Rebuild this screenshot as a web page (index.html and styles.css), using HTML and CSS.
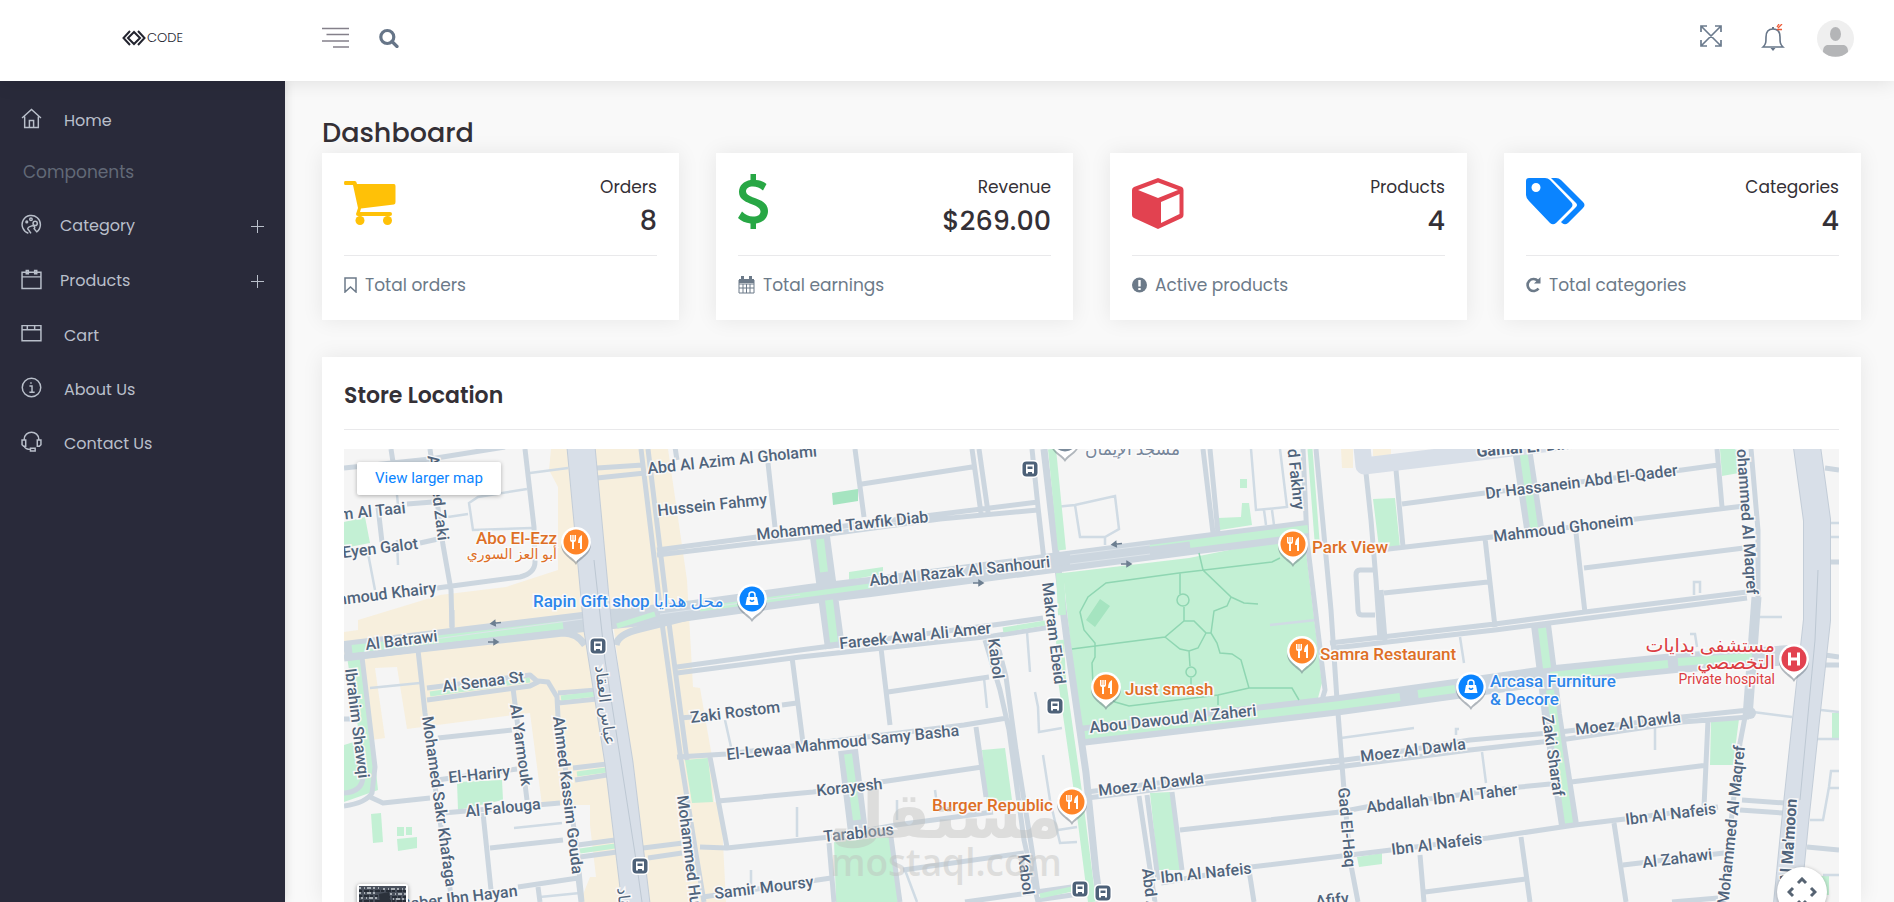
FILE: index.html
```
<!DOCTYPE html>
<html lang="en">
<head>
<meta charset="utf-8">
<meta name="viewport" content="width=device-width, initial-scale=1">
<title>Dashboard</title>
<link rel="stylesheet" href="styles.css">
</head>
<body>
<header class="topbar">
  <a class="brand" href="#" aria-label="Code">
    <svg class="brand-mark" viewBox="0 0 24 16"><g fill="none" stroke="#23242f" stroke-width="2"><path d="M8 1L1.500 8L8 15M16 1L22.500 8L16 15"/><path d="M12 2L6 8L12 14L18 8Z"/></g></svg>
    <span class="brand-name">CODE</span>
  </a>
  <div class="tools">
    <button class="icon-btn" aria-label="Toggle menu"><svg width="27" height="22" viewBox="0 0 27 22"><path d="M0 1.500H27M4.500 7.500H27M0 14H27M11 20H27" stroke="#84808a" stroke-width="1.600"/></svg></button>
    <button class="icon-btn" aria-label="Search"><svg width="20" height="20" viewBox="0 0 20 20" fill="none" stroke="#667588" stroke-width="3.200"><circle cx="8.300" cy="9" r="6.500"/><path d="M13 13.500L18 18.500" stroke-linecap="round"/></svg></button>
  </div>
  <div class="account">
    <button class="icon-btn expand" aria-label="Full screen"><svg width="22" height="22" viewBox="0 0 22 22" fill="none" stroke="#6b7b8d" stroke-width="1.700"><path d="M1 1L21 21M21 1L1 21M1 7V1H7M15 1H21V7M21 15V21H15M7 21H1V15"/></svg></button>
    <button class="icon-btn bell" aria-label="Notifications"><svg width="24" height="28" viewBox="0 0 24 28"><path d="M2 23H22C19 20.500 19 18 19 13C19 8 16.500 5 12 5S5 8 5 13C5 18 5 20.500 2 23Z" fill="none" stroke="#667588" stroke-width="1.600"/><path d="M11 5V3H13V5M9.500 24H14.500L12 27Z" fill="#667588"/><path d="M16 3L18 0M17 4L21 0M16 5.500H21" stroke="#ee5a36" stroke-width="1.300"/></svg></button>
    <button class="icon-btn" aria-label="Profile"><svg width="37" height="37" viewBox="0 0 37 37"><circle cx="18.500" cy="18.500" r="18.500" fill="#efefef"/><ellipse cx="18.500" cy="14" rx="5.500" ry="7" fill="#b4b5b7"/><path d="M6 32C6 27 8 25 11 25H26C29 25 31 27 31 32A18.500 18.500 0 0 1 6 32Z" fill="#b4b5b7"/></svg></button>
  </div>
</header>
<div class="shell">
<nav class="sidebar" aria-label="Main">
  <ul class="menu">
    <li><a class="item" href="#"><svg class="ico" viewBox="0 0 20 20"><path d="M1 9.500L10 1.500L19 9.500M3.500 8V18.500H16.500V8M8 18V12H12V18"/></svg><span>Home</span></a></li>
    <li class="section">Components</li>
    <li><button class="item tight"><svg class="ico" viewBox="0 0 20 20"><path d="M7 18.300A8.700 8.700 0 1 1 15 17L12.500 14C14 12 12 10.500 9.500 11.500C6.500 12.500 5.500 14 7.500 15.500L9.500 18.500"/><circle cx="9.500" cy="5" r="1.200"/><circle cx="5.500" cy="7.500" r=".8"/><circle cx="13.500" cy="9" r="2"/></svg><span>Category</span><i class="plus"></i></button></li>
    <li><button class="item tight"><svg class="ico" viewBox="0 0 20 20"><path d="M1 3H19V18.500H1ZM1 7.500H19M5 1.500H7V4.500H5ZM13 1.500H15V4.500H13Z"/></svg><span>Products</span><i class="plus"></i></button></li>
    <li><a class="item" href="#"><svg class="ico" viewBox="0 0 20 20"><path d="M1 2.500H19V17H1ZM1 6.500H19M6 2.500V6M13 2.500V6"/></svg><span>Cart</span></a></li>
    <li><a class="item" href="#"><svg class="ico" viewBox="0 0 20 20"><circle cx="10" cy="10" r="8.800"/><path d="M8 8.500H10.500V14.500M8 14.500H13M9.500 5V6.500"/></svg><span>About Us</span></a></li>
    <li><a class="item" href="#"><svg class="ico" viewBox="0 0 20 20"><path d="M3 8C3 -1 17 -1 17 8M1 8.500H4.500V14.500H2.500L1 13ZM19 8.500H15.500V14.500H17.500L19 13ZM3 14.500C4 17 6 17.500 9 17.500M9 16.500H13.500V19H9Z"/></svg><span>Contact Us</span></a></li>
  </ul>
</nav>
<main class="content">
  <h1 class="page-title">Dashboard</h1>
  <section class="stats">
    <article class="card stat">
      <div class="stat-top">
        <svg class="big" width="52" height="56" viewBox="0 0 52 56" fill="#ffc107"><path d="M1 7H11Q12.500 7 13 10H50Q51.500 10 51.500 12V28Q51.500 30 50 30.500L17 34.500L16 38H46Q48 38 48 40T46 42H14Q12 42 12 40L14 34L9 11H1Q0 11 0 9T1 7Z"/><circle cx="16" cy="46.500" r="4.500"/><circle cx="43.500" cy="46.500" r="4.500"/></svg>
        <div class="figures"><span>Orders</span><strong>8</strong></div>
      </div>
      <p class="note"><svg width="13" height="16" viewBox="0 0 13 16"><path d="M1 1H12V15L6.500 10L1 15Z" fill="none" stroke="#6c7a89" stroke-width="1.500"/></svg>Total orders</p>
    </article>
    <article class="card stat">
      <div class="stat-top">
        <svg class="big" width="30" height="56" viewBox="0 0 30 56"><path d="M12.500 0H18V6C23 6.500 26 8 28.500 10L25 16.500C22 14 18.500 12.500 15 12.500C10.500 12.500 8 14.500 8 17.500C8 25 30 23 30 37C30 44 25 48.500 18 49.500V55H12.500V49.500C7.500 49 3 47 0 44L4 37.500C7.500 41 11 42.500 15 42.500C20 42.500 22.500 40.500 22.500 37.500C22.500 29 1 31 1 18C1 11.500 6 7 12.500 6Z" fill="#28a745"/></svg>
        <div class="figures"><span>Revenue</span><strong>$269.00</strong></div>
      </div>
      <p class="note"><svg width="17" height="18" viewBox="0 0 17 18"><path d="M1 4H16V17H1ZM1 8H16M1 12H16M5 8V17M8.500 8V17M12 8V17" fill="none" stroke="#6c7a89"/><path d="M1 3H16V7H1ZM3 0H6V4H3ZM11 0H14V4H11Z" fill="#6c7a89"/></svg>Total earnings</p>
    </article>
    <article class="card stat">
      <div class="stat-top">
        <svg class="big" width="52" height="56" viewBox="0 0 52 56"><path d="M26 4L50 13Q51.500 14 51.500 16V41Q51.500 43 50 44L26 55L2 44Q0 43 0 41V16Q0 14 2 13ZM26 8.500L6 16L26 24L46 16ZM29 28V49L47.500 40V20Z" fill="#e24250" fill-rule="evenodd"/></svg>
        <div class="figures"><span>Products</span><strong>4</strong></div>
      </div>
      <p class="note"><svg width="15" height="16" viewBox="0 0 15 16"><circle cx="7.500" cy="8" r="7.500" fill="#6c7a89"/><path d="M7.500 3V9.500M7.500 11V13" stroke="#fff" stroke-width="2.400"/></svg>Active products</p>
    </article>
    <article class="card stat">
      <div class="stat-top">
        <svg class="big" width="60" height="56" viewBox="0 0 60 56" fill="#0a84ff"><path d="M3 4H19Q22 4 24 6L45 28Q48 31 45 34L30 49Q27 51.500 24 49L3 27Q0 24 0 21V7Q0 4 3 4ZM10 9A4.500 4.500 0 1 0 10 18A4.500 4.500 0 1 0 10 9Z" fill-rule="evenodd"/><path d="M25 4H30Q33 4 35 6L57 28Q60 31 57 34L42 49Q39 51.500 36 49L35 48L50 33Q52 31 50 29Z"/></svg>
        <div class="figures"><span>Categories</span><strong>4</strong></div>
      </div>
      <p class="note"><svg width="15" height="16" viewBox="0 0 15 16"><path d="M12 4A6 6 0 1 0 12.500 11.500" fill="none" stroke="#6c7a89" stroke-width="2.600"/><path d="M14.500 0V6.500H8Z" fill="#6c7a89"/></svg>Total categories</p>
    </article>
  </section>

  <section class="card store">
    <h2 class="store-title">Store Location</h2>
    <div class="map">
      <svg class="map-art" viewBox="344 449 1495 453" preserveAspectRatio="xMinYMin slice" role="img" aria-label="Map of the store area">
        <defs>
          <g id="pin"><path d="M0 21C-3 15 -15 12 -15 0A15 15 0 0 1 15 0C15 12 3 15 0 21Z" fill="#5d6b78" opacity=".45" transform="translate(0 2)"/><path d="M0 20C-3 15 -15 11 -15 0A15 15 0 0 1 15 0C15 11 3 15 0 20Z" fill="#fff"/></g>
          <g id="food"><use href="#pin"/><circle r="12.500" fill="#ff8427"/><path d="M-6 -7V-2Q-6 0 -4 0V7H-2V0Q0 0 0 -2V-7H-1.500V-2H-2.300V-7H-3.700V-2H-4.500V-7ZM6 -7Q2 -5 2 1H4V7H6Z" fill="#fff"/></g>
          <g id="shop"><use href="#pin"/><circle r="12.500" fill="#0a84ff"/><path d="M-5 -2H5L6.500 6H-6.500Z" fill="#fff"/><path d="M-3 -2V-4A3 3 0 0 1 3 -4V-2" fill="none" stroke="#fff" stroke-width="1.500"/><path d="M-2 1Q0 3.500 2 1" fill="none" stroke="#0a84ff" stroke-width="1.400"/></g>
          <g id="bus"><rect x="-9" y="-9" width="18" height="18" rx="5" fill="#fff"/><rect x="-7.500" y="-7.500" width="15" height="15" rx="4" fill="#4d6178"/><path d="M-4 -4.500H4V4.500H2V3H-2V4.500H-4Z" fill="#fff"/><path d="M-2.500 -2.500H2.500V0H-2.500Z" fill="#4d6178"/></g>
          <path id="arrow" d="M-5 0H4M1 -2.500L5 0L1 2.500Z" fill="#6d7f91" stroke="#6d7f91" stroke-width="1.500"/>
        </defs>
        <rect x="344" y="449" width="1495" height="1000" fill="#f5f5f5"/>
        <g fill="#f7efdd">
          <path d="M551 449H580L614 763L640 902H580L590 877H596L590 825L590 805H542L530 713L407 729L397 667L375 668L385 738L372 740L362 657L344 660V632L358 630V620L440 595L506 587L558 570V487L549 470Z"/>
          <path d="M590 449H668L687 580L693 687L700 688L712 757L714 802L721 803L726 902H645L630 763L614 630Z"/>
          <path d="M1341 449H1353V468H1342ZM1373 449H1391V456H1373Z"/>
        </g>
        <g fill="#c3f0d4">
          <path d="M344 522L365 517L370 543L344 548ZM347 657H362L373 743L378 790L344 802V745L360 740ZM457 782L502 780L503 800L458 810ZM371 814L381 813L383 842L373 843ZM397 827H404V836H397ZM406 827H412V835H406ZM397 839L417 837V848L398 851ZM685 760L708 758L713 802L692 803ZM834 840L891 837L898 902H836ZM982 750L1005 748L1012 800L987 803ZM849 572L883 567V574L849 580ZM1218 518L1241 517L1242 503L1249 503L1252 525L1220 530ZM1240 479H1247V488H1240Z"/>
          <path d="M1063 573L1189 558L1304 535L1322 683L1318 698L1080 735Z"/>
          <path d="M1373 499L1395 498L1400 547L1379 548ZM1720 449H1737L1739 473L1722 476ZM1711 722L1739 719L1733 765H1710ZM1357 857L1382 853V864L1359 867ZM1832 713H1839V739H1832ZM1821 876H1829V895H1821ZM1150 793L1170 792L1182 870H1158Z"/>
        </g>
        <path d="M832 493L858 489V501L833 505ZM1100 599L1110 606L1095 627L1086 620Z" fill="#a5e4c0"/>
        <g fill="none" stroke="#d0dbe4" stroke-width="2.500">
          <path d="M448 517L468 514M527 489L478 497L469 503L473 530L532 528M530 473L568 468M367 548L375 590M370 688L420 683M514 828L562 823M725 720L731 747M797 807V837M1055 507L1075 505L1115 496L1119 529L1105 537L1080 537L1075 505M1105 537V545M1251 449L1256 510L1287 507L1280 449M1264 510L1266 525M1272 510L1274 525M1027 632L1030 672M984 678L987 708M1035 692L1038 707L1039 732L1062 728M1043 755L1050 800L1060 843L1077 842M1058 830L1077 827M935 790L938 812M897 800V820M905 870L917 902M751 870V885M540 897L580 893M1694 595V582H1700V593M1760 617H1782M1690 634H1695L1697 647M1460 637L1464 663M1753 712L1792 717M1341 738L1414 728M1456 735V729H1459M1482 752L1486 783M1655 728V750M1270 625L1316 620M1828 523H1839M1828 537H1839M1821 710L1839 712M1817 739H1839M1839 771H1831L1829 787L1823 820H1810M1829 788H1839M1823 875H1839M397 495L398 505M397 540L398 565"/>
        </g>
        <g class="roads">
          <path d="M344 468L430 459L505 447M391 449L393 462M407 504L433 502M378 507L382 542M420 543L438 539M430 449L443 545L451 590L452 628M437 588L520 577Q535 573 535 562L534 527L525 449M597 468L643 465M597 478L645 473M641 449L662 623L681 760L697 860L704 902M648 449L669 623L687 760M675 447L677 460M768 463L775 527"/>
          <path d="M657 550L757 537L933 515L1038 502M657 555L800 538L940 519L1038 510M855 449L864 517M862 484L972 467M972 449L981 513M979 449L988 512M1032 449L1038 507L1044 560M1203 449L1213 533M1210 449L1218 533"/>
          <path d="M677 667L800 650L1001 624L1043 618M677 673L800 657L993 636L1051 627M792 657L803 743M782 705L797 703M680 718L692 717M677 757L727 754L964 725L1007 718M881 648L890 725M888 692L989 677M985 640L1000 690L1009 730L1024 840L1038 902M995 635L1006 677L1016 750L1032 850L1038 893M976 727L986 797M718 801L813 792L982 767M710 757L727 847M643 848L683 843M648 858L682 853M700 847L727 848L830 837L896 825L993 812M703 897L831 878M829 843L834 902M891 837L900 902M903 870L1024 853M965 902L1086 885M1037 900L1086 893"/>
          <path d="M362 657L375 767L372 793Q366 803 344 806M344 793Q362 792 363 777M370 797L383 803L430 798M418 650L425 713L437 800L452 902M427 688L530 675L538 682L530 686L427 700M538 681L548 682L557 697L558 717L577 850L582 902M558 693L597 690M558 703L597 699M513 688L527 800M438 738L512 730M437 780L517 769M443 813L560 803M573 768L607 764M575 780L607 775M578 845L615 840M580 857L617 852M490 848L563 840M483 813L491 890M518 887L578 878L581 902M538 887L540 902M344 719H350M452 610V627"/>
          <path d="M1366 473L1371 520L1376 580L1380 640M1381 590L1385 640M1396 470L1403 547M1402 504L1485 493L1682 470L1718 465M1380 550L1492 537L1636 519L1744 506M1485 538L1495 627M1384 593L1488 582M1576 533L1585 613M1584 568L1744 548M1330 643L1495 624L1585 612L1747 592M1334 648L1495 630L1747 598M1717 449L1722 507M1751 449L1758 530V597M1754 597L1745 717L1740 743L1722 902M1759 597L1750 717M1373 570H1360Q1356 570 1356 575L1358 610Q1358 615 1362 615H1375M1825 468L1839 470M1830 562H1839M1825 655L1839 657M1825 665H1839"/>
          <path d="M1330 762L1360 758L1470 740L1560 732L1682 717L1749 710M1330 768L1470 750L1560 740L1682 722L1749 717M1087 792L1340 760M1087 798L1340 767M1180 830L1340 812L1366 807L1520 787L1571 782L1708 765M1708 720L1704 807M1161 883L1251 867L1391 850L1488 838L1575 825L1625 819L1718 807M1742 800L1785 803M1740 810L1783 813M1420 855L1424 902M1521 837L1530 902M1425 892L1526 879M1614 823L1626 902M1623 865L1724 853M1672 902L1718 898M1807 847L1839 850M1139 796L1155 902M1147 795L1158 880M1172 792L1182 870M1249 870L1254 902M1303 449L1307 540L1325 690L1322 700M1316 449L1331 610L1337 700L1344 790L1350 860L1358 902"/>
        </g>
        <circle cx="1750" cy="713" r="6" fill="#ccd6df"/>
        <g class="wide">
          <path d="M820 537L835 648M848 750L858 832M1522 449L1534 528M1541 625L1547 672L1552 715L1569 825M1080 736L1340 705L1456 689L1546 676L1675 663L1790 655M344 651L460 637L583 622L680 612L810 594L870 587L1060 562L1190 545L1308 530"/>
        </g>
        <path d="M1044 449L1056 553L1067 640L1086 773L1096 873L1100 902" fill="none" stroke="#ccd6df" stroke-width="7"/>
        <g fill="none" stroke="#c3f0d4" stroke-width="8">
          <path d="M820 539L824 572M829 600L834 642M848 754L857 820M1523 449L1534 528M1542 628L1547 668M1550 690L1569 823M1085 735L1340 705L1400 697M1418 694L1455 689M1550 676L1668 664M1678 662L1752 657M352 649L460 637L563 625M1150 549L1308 529M1052 449L1062 550M1060 573L1062 615M1060 640L1062 680L1078 792L1092 902"/>
          <path d="M1310 449L1317 540M617 626L655 614M700 609L870 586M1003 630L1045 623M430 694L530 680M561 698L596 694M577 774L606 770M580 851L615 846M1040 896L1072 889" stroke-width="5"/>
        </g>
        <g fill="none" stroke="#ccd6df" stroke-width="7">
          <path d="M900 582L1060 562L1190 545"/>
          <path d="M344 658L393 652L563 633Q577 633 585 645M616 645Q618 634 640 629L700 614"/>
        </g>
        <path d="M1070 555L1150 545M1070 564L1150 554M420 641L583 619M660 614L800 595" fill="none" stroke="#dde4ea"/>
        <g fill="none" stroke="#c3cdd8" stroke-width="29"><path d="M581 447L598 630L619 763L636 904"/><path d="M1807 447L1817 520V620L1806 720L1795 823L1787 904" stroke-width="28"/></g>
        <g fill="none" stroke="#d8dfe8" stroke-width="27"><path d="M581 447L598 630L619 763L636 904"/><path d="M1807 447L1817 520V620L1806 720L1795 823L1787 904" stroke-width="26"/><path d="M1362 447L1364 466L1480 452L1600 437" stroke-width="17" stroke-linejoin="round"/></g>
        <path d="M594 560L605 660L636 860L642 902M1818 570L1815 640L1800 800" fill="none" stroke="#bdc8d3"/>
        <g fill="none" stroke="#8fd6b2" stroke-width="1.500">
          <path d="M1072 649L1165 637L1184 621L1194 621L1206 633L1198 648L1189 651L1180 649L1165 637M1180 573V594M1184 607V621M1189 651L1190 666M1191 678V690M1206 633H1211L1214 611L1227 606L1231 597L1203 570L1199 553M1231 597L1244 603L1258 604M1211 633L1217 643L1220 653L1232 654L1241 660L1249 688M1280 558L1272 562L1179 573L1106 583L1088 597L1080 612L1084 630L1095 643V657L1092 663L1093 685L1115 702L1129 706L1218 695L1249 688L1292 688L1299 700M1218 695V705"/>
          <circle cx="1183" cy="600" r="6"/><circle cx="1191" cy="672" r="5"/>
        </g>
        <use href="#arrow" transform="translate(1117 544) rotate(174)"/><use href="#arrow" x="1126" y="564"/><use href="#arrow" x="978" y="583"/><use href="#arrow" transform="translate(496 623) rotate(174)"/><use href="#arrow" x="493" y="642"/>

        <g class="street">
          <text transform="translate(648 474) rotate(-6)">Abd Al Azim Al Gholami</text>
          <text transform="translate(658 516) rotate(-6)">Hussein Fahmy</text>
          <text transform="translate(757 540) rotate(-6)">Mohammed Tawfik Diab</text>
          <text class="end" transform="translate(406 513) rotate(-6)">Imam Al Taai</text>
          <text transform="translate(343 558) rotate(-7)">Eyen Galot</text>
          <text class="end" transform="translate(437 593) rotate(-7)">Mahmoud Khairy</text>
          <text class="end" transform="translate(438 541) rotate(83)">Ahmed Zaki</text>
          <text transform="translate(366 650) rotate(-7)">Al Batrawi</text>
          <text transform="translate(443 692) rotate(-7)">Al Senaa St</text>
          <text transform="translate(345 669) rotate(83)">Ibrahim Shawqi</text>
          <text transform="translate(422 717) rotate(82)">Mohamed Sakr Khafaga</text>
          <text transform="translate(510 705) rotate(82)">Al Yarmouk</text>
          <text transform="translate(553 717) rotate(83)">Ahmed Kassim Gouda</text>
          <text transform="translate(449 783) rotate(-6)">El-Hariry</text>
          <text transform="translate(466 817) rotate(-6)">Al Falouga</text>
          <text transform="translate(691 723) rotate(-7)">Zaki Rostom</text>
          <text transform="translate(727 760) rotate(-6)">El-Lewaa Mahmoud Samy Basha</text>
          <text transform="translate(817 796) rotate(-6)">Korayesh</text>
          <text transform="translate(824 842) rotate(-6)">Tarablous</text>
          <text transform="translate(715 899) rotate(-7)">Samir Moursy</text>
          <text class="end" transform="translate(518 896) rotate(-7)">Gaber Ibn Hayan</text>
          <text transform="translate(677 796) rotate(83)">Mohammed Hussein</text>
          <text transform="translate(988 639) rotate(83)">Kabol</text>
          <text transform="translate(1018 855) rotate(83)">Kabol</text>
          <text transform="translate(1042 583) rotate(83)">Makram Ebeid</text>
          <text transform="translate(840 649) rotate(-6)">Fareek Awal Ali Amer</text>
          <text transform="translate(870 586) rotate(-6)">Abd Al Razak Al Sanhouri</text>
          <text transform="translate(1090 733) rotate(-6)">Abou Dawoud Al Zaheri</text>
          <text transform="translate(1099 796) rotate(-7)">Moez Al Dawla</text>
          <text transform="translate(1161 883) rotate(-6)">Ibn Al Nafeis</text>
          <text transform="translate(1142 869) rotate(83)">Abd Al Aziz</text>
          <text transform="translate(1316 907) rotate(-6)">Afify</text>
          <text class="end" transform="translate(1294 510) rotate(84)">Ahmed Fakhry</text>
          <text class="heavy" transform="translate(1477 457) rotate(-5)">Gamal El-Din</text>
          <text transform="translate(1486 499) rotate(-7)">Dr Hassanein Abd El-Qader</text>
          <text transform="translate(1494 542) rotate(-7)">Mahmoud Ghoneim</text>
          <text class="end" transform="translate(1747 595) rotate(86)">Mohammed Al Maqref</text>
          <text transform="translate(1361 762) rotate(-7)">Moez Al Dawla</text>
          <text transform="translate(1576 735) rotate(-7)">Moez Al Dawla</text>
          <text transform="translate(1542 716) rotate(82)">Zaki Sharaf</text>
          <text transform="translate(1367 813) rotate(-7)">Abdallah Ibn Al Taher</text>
          <text transform="translate(1338 788) rotate(85)">Gad El-Haq</text>
          <text transform="translate(1392 855) rotate(-7)">Ibn Al Nafeis</text>
          <text transform="translate(1626 825) rotate(-7)">Ibn Al Nafeis</text>
          <text transform="translate(1643 868) rotate(-7)">Al Zahawi</text>
          <text class="end" transform="translate(1745 746) rotate(-84)">Mohammed Al Maqref</text>
          <text class="end heavy" transform="translate(1797 799) rotate(-86)">Al Ma'moon</text>
          <text class="mid" transform="translate(600 706) rotate(83)">عباس العقاد</text>
          <text class="mid" transform="translate(622 928) rotate(83)">عباس العقاد</text>
        </g>
        <g class="poi food">
          <text class="end" x="557" y="544">Abo El-Ezz</text><text class="end small" x="557" y="559">أبو العز السوري</text>
          <text x="1312" y="553">Park View</text><text x="1320" y="660">Samra Restaurant</text><text x="1125" y="695">Just smash</text><text class="end" x="1053" y="811">Burger Republic</text>
        </g>
        <g class="poi shop"><text x="533" y="607">Rapin Gift shop محل هدايا</text><text x="1490" y="687">Arcasa Furniture</text><text x="1490" y="705">&amp; Decore</text></g>
        <g class="poi health"><text class="end ar" x="1775" y="652">مستشفى بدايات</text><text class="end ar" x="1775" y="669">التخصصي</text><text class="end small" x="1775" y="684">Private hospital</text></g>
        <g class="poi place"><text x="1085" y="455">مسجد الإيمان</text></g>
        <use href="#food" x="576" y="542"/><use href="#food" x="1293" y="544"/><use href="#food" x="1302" y="651"/><use href="#food" x="1106" y="687"/><use href="#food" x="1072" y="802"/>
        <use href="#shop" x="752" y="599"/><use href="#shop" x="1471" y="687"/>
        <use href="#pin" x="1065" y="439"/><circle cx="1065" cy="439" r="12.500" fill="#7b8b9b"/>
        <use href="#pin" x="1794" y="659"/><circle cx="1794" cy="659" r="12.500" fill="#e24250"/><path d="M1789.500 652.500V665.500M1798.500 652.500V665.500M1789.500 659H1798.500" stroke="#fff" stroke-width="3"/>
        <use href="#bus" x="1030" y="469"/><use href="#bus" x="1055" y="706"/><use href="#bus" x="598" y="646"/><use href="#bus" x="640" y="866"/><use href="#bus" x="1080" y="889"/><use href="#bus" x="1103" y="893"/>
        <g class="watermark"><text class="wm-ar" x="946" y="838">مستقل</text><text class="wm-en" x="946" y="876">mostaql.com</text></g>
      </svg>
      <a class="larger" href="#">View larger map</a>
      <button class="satellite" aria-label="Show satellite imagery"><svg width="47" height="47" viewBox="0 0 47 47"><rect width="47" height="47" fill="#49505c"/><path d="M0 2H20M24 3H47M0 7H16M31 8H47M2 12H18M29 13H46M0 17H20M30 18H47" stroke="#aab0b6" stroke-width="2" stroke-dasharray="2 3 1 2 4 2"/><path d="M0 5H47M0 10H19M28 11H47M0 15H47" stroke="#262c36" stroke-width="2" stroke-dasharray="3 2 5 1"/><path d="M20 8L30 6L32 20H21Z" fill="#2b313b"/></svg></button>
      <button class="camera" aria-label="Map camera controls"><svg width="30" height="30" viewBox="0 0 30 30" fill="none" stroke="#566372" stroke-width="3"><path d="M11 6L15 2L19 6M11 24L15 28L19 24M6 11L2 15L6 19M24 11L28 15L24 19"/></svg></button>
    </div>
  </section>
</main>
</div>
</body>
</html>
```
FILE: styles.css
```
* { box-sizing: border-box; }
body {
  margin: 0;
  height: 100vh;
  display: flex;
  flex-direction: column;
  overflow: hidden;
  background: #f9f9f9;
  color: #343036;
  font: 17px/26px Poppins, Inter, sans-serif;
}
button { border: 0; padding: 0; background: none; font: inherit; color: inherit; cursor: pointer; }
a { color: inherit; text-decoration: none; }
svg { display: block; flex: none; }

.topbar {
  position: relative;
  z-index: 2;
  display: flex;
  align-items: center;
  flex: none;
  height: 81px;
  padding: 0 40px 5px 0;
  background: #fff;
  box-shadow: 0 0 20px rgba(0, 0, 0, .12);
}
.brand { display: flex; align-items: center; justify-content: center; width: 285px; padding-left: 20px; gap: 1px; }
.brand-mark { width: 24px; height: 16px; }
.brand-name { font: 300 13px/16px Poppins, Lato, sans-serif; color: #23242f; }
.tools { display: flex; align-items: center; gap: 30px; margin-left: 37px; }
.account { display: flex; align-items: center; gap: 36px; margin-left: auto; }
.account .expand { margin-right: 3px; padding-bottom: 4px; }
.account .bell { margin-right: -4px; }
.icon-btn { display: flex; }

.shell { display: flex; flex: 1; min-height: 0; }
.sidebar {
  flex: none;
  width: 285px;
  padding-top: 12px;
  background: #292a3a;
  box-shadow: 0 0 10px rgba(0, 0, 0, .15);
  color: #b9bfca;
}
.menu { list-style: none; margin: 0; padding: 0; }
.item { display: flex; align-items: center; width: 100%; height: 54px; padding: 1px 21px 0; gap: 22px; text-align: left; font-size: 16px; }
.tight { gap: 18px; height: 55px; }
.ico { width: 21px; height: 21px; margin-bottom: 4px; fill: none; stroke: #b9bfca; stroke-width: 1.400; }
.section { height: 51px; padding: 12px 23px; color: #626977; }
.plus {
  width: 13px;
  height: 13px;
  margin-left: auto;
  background: linear-gradient(#b9bfca, #b9bfca) center / 13px 1px no-repeat, linear-gradient(#b9bfca, #b9bfca) center / 1px 13px no-repeat;
}

.content { flex: 1; min-width: 0; display: flex; flex-direction: column; padding: 32px 33px 0 37px; }
.page-title { margin: 0; font-size: 27px; line-height: 40px; font-weight: 500; }
.card { background: #fff; box-shadow: 0 0 20px rgba(0, 0, 0, .08); }
.stats { display: grid; grid-template-columns: repeat(4, 1fr); gap: 37px; margin-bottom: 37px; }
.stat { height: 167px; padding: 21px 22px 0; }
.stat-top { display: flex; justify-content: space-between; height: 82px; border-bottom: 1px solid #e9e9eb; }
.figures { display: flex; flex-direction: column; align-items: flex-end; }
.figures strong { font-size: 27px; line-height: 42px; font-weight: 500; }
.note { display: flex; align-items: center; gap: 8px; margin: 16px 0 0; color: #6c7a89; }

.store { flex: 1; min-height: 0; display: flex; flex-direction: column; padding: 0 22px; }
.store-title { margin: 0 0 19px; padding: 22px 0 16px; border-bottom: 1px solid #e9e9eb; font-size: 22px; line-height: 34px; font-weight: 600; }
.map { position: relative; flex: 1; min-height: 0; overflow: hidden; }
.map-art { width: 100%; height: 100%; }
.larger {
  position: absolute;
  left: 13px;
  top: 13px;
  padding: 0 18px;
  border-radius: 2px;
  background: #fff;
  box-shadow: 0 1px 4px rgba(0, 0, 0, .3);
  color: #0a84ff;
  font: 15px/33px Roboto, sans-serif;
}
.satellite { position: absolute; left: 13px; bottom: -33px; padding: 2px; border-radius: 3px; background: #fff; box-shadow: 0 1px 4px rgba(0, 0, 0, .4); }
.camera { position: absolute; right: 12px; bottom: -15px; padding: 10px; border-radius: 50%; background: #fff; box-shadow: 0 1px 4px rgba(0, 0, 0, .3); }

.roads { fill: none; stroke: #ccd6df; stroke-width: 5; stroke-linejoin: round; }
.wide { fill: none; stroke: #ccd6df; stroke-width: 20; stroke-linejoin: round; }
.street { font: 500 16px Roboto, "DejaVu Sans", sans-serif; fill: #50647c; stroke: #f8f8f8; stroke-width: 3px; paint-order: stroke; }
.heavy { font-weight: 700; }
.end { text-anchor: end; }
.mid { text-anchor: middle; }
.poi { font: 500 17px Roboto, "DejaVu Sans", sans-serif; stroke: #fafafa; stroke-width: 3px; paint-order: stroke; }
.poi .small { font-size: 14px; font-weight: 400; }
.poi .ar { font-size: 19px; font-weight: 400; }
.food { fill: #de6f26; }
.shop { fill: #2d86ea; }
.health { fill: #dc3d42; }
.place { fill: #77869a; }
.watermark { fill: #bdbdbb; opacity: .42; text-anchor: middle; }
.wm-ar { font: bold 64px "DejaVu Sans", sans-serif; }
.wm-en { font: 600 37px "Open Sans", sans-serif; }
```
